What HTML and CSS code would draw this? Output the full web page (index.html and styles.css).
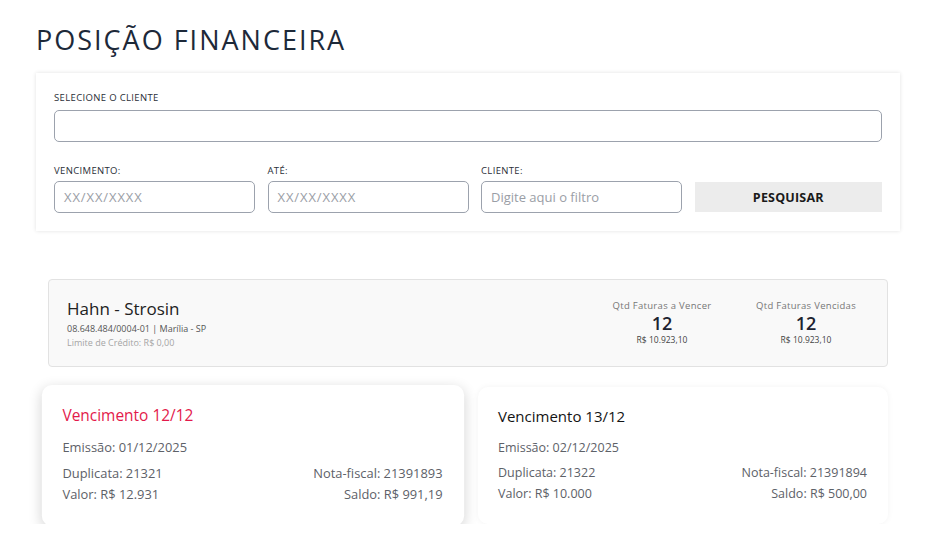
FILE: index.html
```html
<!DOCTYPE html>
<html lang="pt-BR">
<head>
<meta charset="utf-8">
<title>Posição Financeira</title>
<link rel="stylesheet" href="styles.css">
</head>
<body>
<main class="page">
  <h1 class="title">POSIÇÃO FINANCEIRA</h1>

  <section class="filter-card">
    <label class="label label-top">SELECIONE O CLIENTE</label>
    <div class="input input-wide"></div>

    <div class="filter-row">
      <div class="field">
        <label class="label">VENCIMENTO:</label>
        <div class="input"><span class="placeholder placeholder-date">XX/XX/XXXX</span></div>
      </div>
      <div class="field">
        <label class="label">ATÉ:</label>
        <div class="input"><span class="placeholder placeholder-date">XX/XX/XXXX</span></div>
      </div>
      <div class="field">
        <label class="label">CLIENTE:</label>
        <div class="input"><span class="placeholder">Digite aqui o filtro</span></div>
      </div>
      <div class="field field-btn">
        <button class="btn">PESQUISAR</button>
      </div>
    </div>
  </section>

  <section class="results">
    <div class="client-card">
      <div class="client-info">
        <div class="client-name">Hahn - Strosin</div>
        <div class="client-doc">08.648.484/0004-01 | Marília - SP</div>
        <div class="client-limit">Limite de Crédito: R$ 0,00</div>
      </div>
      <div class="stats">
        <div class="stat">
          <div class="stat-label">Qtd Faturas a Vencer</div>
          <div class="stat-num">12</div>
          <div class="stat-val">R$ 10.923,10</div>
        </div>
        <div class="stat">
          <div class="stat-label">Qtd Faturas Vencidas</div>
          <div class="stat-num">12</div>
          <div class="stat-val">R$ 10.923,10</div>
        </div>
      </div>
    </div>

    <div class="invoices">
      <article class="invoice invoice-active">
        <h2 class="inv-title inv-title-red">Vencimento 12/12</h2>
        <div class="inv-line">Emissão: 01/12/2025</div>
        <div class="inv-row"><span>Duplicata: 21321</span><span>Nota-fiscal: 21391893</span></div>
        <div class="inv-row"><span>Valor: R$ 12.931</span><span>Saldo: R$ 991,19</span></div>
      </article>
      <article class="invoice">
        <h2 class="inv-title">Vencimento 13/12</h2>
        <div class="inv-line">Emissão: 02/12/2025</div>
        <div class="inv-row"><span>Duplicata: 21322</span><span>Nota-fiscal: 21391894</span></div>
        <div class="inv-row"><span>Valor: R$ 10.000</span><span>Saldo: R$ 500,00</span></div>
      </article>
    </div>
  </section>
</main>
</body>
</html>
```

FILE: styles.css
```css
* { box-sizing: border-box; }
html, body { margin: 0; padding: 0; background: #fff; }
body {
  font-family: "Open Sans", "Noto Sans", sans-serif;
  color: #333;
}
.page {
  padding: 20px 26px 0 36px;
}
.title {
  margin: 0;
  font-family: "Open Sans", sans-serif;
  font-weight: 400;
  font-size: 27px;
  line-height: 40px;
  color: #1d2939;
  letter-spacing: 2px;
}
.filter-card {
  margin-top: 13px;
  background: #fff;
  box-shadow: 0 0 4px rgba(0,0,0,0.12);
  padding: 19px 18px 18px 18px;
}
.label {
  display: block;
  font-size: 9.5px;
  line-height: 12px;
  color: #2a2f38;
  text-transform: uppercase;
  letter-spacing: 0.35px;
  margin-bottom: 4px;
}
.label-top { margin-bottom: 6px; }
.input {
  height: 32px;
  border: 1px solid #9ca2ad;
  border-radius: 5px;
  background: #fff;
  display: flex;
  align-items: center;
  padding: 0 9px;
}
.placeholder {
  font-size: 13px;
  color: #9a9ea6;
}
.placeholder-date { letter-spacing: 0.9px; }
.filter-row {
  margin-top: 23px;
  display: grid;
  grid-template-columns: 201px 201px 201px 1fr;
  column-gap: 12.5px;
  align-items: end;
}
.btn {
  display: block;
  width: 100%;
  height: 30px;
  margin-bottom: 1px;
  border: 0;
  background: #ececec;
  font-family: "Open Sans", sans-serif;
  font-weight: 700;
  font-size: 12.5px;
  color: #1a1a1a;
  letter-spacing: 0.2px;
}
.results {
  padding: 48px 12px 0 12px;
}
.client-card {
  height: 88px;
  background: #f9f9f9;
  border: 1px solid #e2e2e2;
  border-radius: 4px;
  display: flex;
  justify-content: space-between;
  align-items: center;
  padding: 0 23px 0 18px;
}
.client-name {
  font-size: 17px;
  line-height: 22px;
  color: #222;
}
.client-doc {
  font-size: 9px;
  line-height: 13px;
  margin-top: 2px;
  color: #555;
}
.client-limit {
  font-size: 9px;
  line-height: 13px;
  margin-top: 1px;
  color: #a5a5a5;
}
.stats {
  display: flex;
  gap: 28px;
}
.stat {
  width: 116px;
  text-align: center;
}
.stat-label {
  font-size: 9.5px;
  line-height: 12px;
  letter-spacing: 0.3px;
  color: #777;
}
.stat-num {
  font-size: 18px;
  line-height: 22px;
  font-weight: 600;
  color: #1d2330;
}
.stat-val {
  font-size: 8.5px;
  line-height: 12px;
  color: #444;
}
.invoices {
  margin-top: 20px;
  display: grid;
  grid-template-columns: 1fr 1fr;
  gap: 20px;
}
.invoice {
  background: #fff;
  border-radius: 10px;
  box-shadow: 0 0 6px rgba(0,0,0,0.05);
  padding: 17px 21px 22px 20px;
  height: 137px;
}
.invoice-active {
  transform: scale(1.03);
  box-shadow: 0 3px 12px rgba(0,0,0,0.16);
}
.inv-title {
  margin: 0 0 11px 0;
  font-size: 15px;
  line-height: 24px;
  font-weight: 400;
  color: #141414;
}
.inv-title-red { color: #e3194b; }
.inv-line {
  font-size: 12.5px;
  line-height: 18px;
  color: #5d6168;
  margin-bottom: 5px;
}
.inv-row {
  display: flex;
  justify-content: space-between;
  font-size: 12.5px;
  line-height: 21px;
  color: #5d6168;
}
```
